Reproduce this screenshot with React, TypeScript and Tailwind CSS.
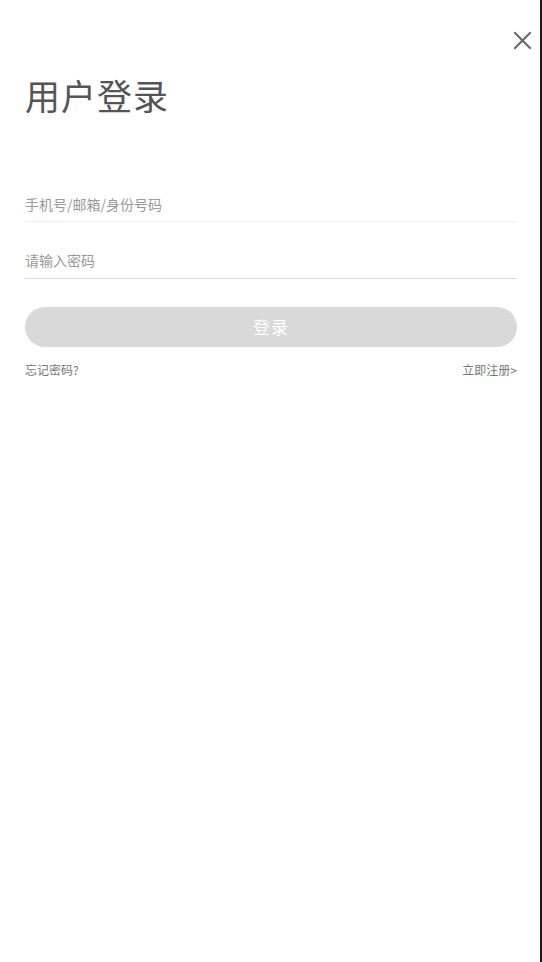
const font = "font-['Noto_Sans_CJK_SC','Noto_Sans',sans-serif]";

export default function App() {
  return (
    <div className={`w-[542px] min-h-[962px] bg-white border-r-2 border-[#1a1a1a] ${font}`}>
      {/* 关闭 */}
      <div className="flex justify-end pt-[31px] pr-[8px]">
        <button className="text-[#666]" aria-label="关闭">
          <svg width="19" height="19" viewBox="0 0 19 19" fill="none" stroke="currentColor" strokeWidth="2" strokeLinecap="square">
            <path d="M2 2 L17 17 M17 2 L2 17" />
          </svg>
        </button>
      </div>

      <main className="px-[25px] pr-[23px]">
        <h1 className="mt-[25px] text-[35px] leading-[40px] tracking-[1px] text-[#555]">用户登录</h1>

        {/* 表单 */}
        <div className="mt-[71px]">
          <input
            className="block w-full h-[36px] border-b border-[#eee] text-[14px] text-[#333] placeholder:text-[#999] outline-none"
            placeholder="手机号/邮箱/身份号码"
          />
          <input
            type="password"
            className="block w-full h-[57px] pt-[19px] border-b border-[#ddd] text-[14px] text-[#333] placeholder:text-[#999] outline-none"
            placeholder="请输入密码"
          />
        </div>

        <button className="block mt-[28px] w-full h-[40px] rounded-full bg-[#d9d9d9] text-white text-[17px] tracking-[1px]">
          登录
        </button>

        <div className="mt-[14px] flex justify-between text-[12px] text-[#777]">
          <a>忘记密码?</a>
          <a>立即注册&gt;</a>
        </div>
      </main>
    </div>
  );
}
